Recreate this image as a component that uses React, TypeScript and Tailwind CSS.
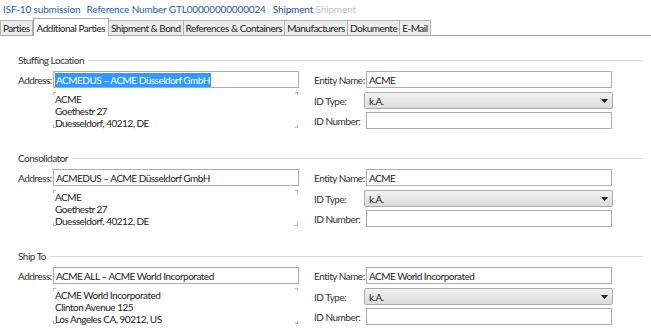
const tabs = [
  "Parties",
  "Additional Parties",
  "Shipment & Bond",
  "References & Containers",
  "Manufacturers",
  "Dokumente",
  "E-Mail",
];

const sections = [
  {
    title: "Stuffing Location",
    address: "ACMEDUS – ACME Düsseldorf GmbH",
    selected: true,
    lines: ["ACME", "Goethestr 27", "Duesseldorf, 40212, DE"],
    entity: "ACME",
  },
  {
    title: "Consolidator",
    address: "ACMEDUS – ACME Düsseldorf GmbH",
    selected: false,
    lines: ["ACME", "Goethestr 27", "Duesseldorf, 40212, DE"],
    entity: "ACME",
  },
  {
    title: "Ship To",
    address: "ACME ALL – ACME World Incorporated",
    selected: false,
    lines: ["ACME World Incorporated", "Clinton Avenue 125", "Los Angeles CA, 90212, US"],
    entity: "ACME World Incorporated",
  },
];

function Corner({ pos }: { pos: "tl" | "tr" | "bl" | "br" }) {
  const cls = {
    tl: "left-0 top-0 border-l border-t",
    tr: "right-0 top-0 border-r border-t",
    bl: "left-0 bottom-0 border-l border-b",
    br: "right-0 bottom-0 border-r border-b",
  }[pos];
  return <span className={`absolute h-[3px] w-[3px] border-[#b5b5b5] ${cls}`} />;
}

function Section({
  title,
  address,
  selected,
  lines,
  entity,
}: (typeof sections)[number]) {
  return (
    <div className="mb-[23px]">
      <div className="flex h-[12px] items-center gap-[4px]">
        <span className="whitespace-nowrap text-[#333]">{title}</span>
        <div className="mr-[8px] h-px flex-1 bg-[#d9d9d9]" />
      </div>
      <div className="mt-[5px] flex">
        <div className="w-[296px] shrink-0">
          <div className="flex h-[17px] items-center">
            <span className="w-[35px] shrink-0 whitespace-nowrap text-[#333]">Address:</span>
            <div className="flex h-[17px] w-[246px] shrink-0 items-center overflow-hidden whitespace-nowrap border border-[#abadb3] px-[1px]">
              <span
                className={
                  selected
                    ? "bg-[#3399ff] px-[1px] leading-[14px] text-white"
                    : "px-[1px] text-[#222]"
                }
              >
                {address}
              </span>
            </div>
          </div>
          <div className="relative ml-[35px] mt-[4px] h-[36px] w-[245px] whitespace-nowrap pl-[2px] pt-[1px] leading-[12px] text-[#222]">
            <Corner pos="tl" />
            <Corner pos="tr" />
            <Corner pos="bl" />
            <Corner pos="br" />
            {lines.map((l) => (
              <div key={l}>{l}</div>
            ))}
          </div>
        </div>
        <div className="w-[300px] shrink-0">
          <div className="flex h-[17px] items-center">
            <span className="w-[52px] shrink-0 whitespace-nowrap text-[#333]">Entity Name:</span>
            <div className="flex h-[17px] w-[246px] items-center whitespace-nowrap border border-[#abadb3] px-[2px] text-[#222]">
              {entity}
            </div>
          </div>
          <div className="mt-[4px] flex h-[17px] items-center">
            <span className="w-[50px] shrink-0 whitespace-nowrap text-[#333]">ID Type:</span>
            <div className="flex h-[17px] w-[249px] items-center justify-between rounded-[2px] border border-[#acacac] bg-gradient-to-b from-[#f3f3f3] to-[#dadada] pl-[4px] pr-[4px] text-[#222]">
              <span>k.A.</span>
              <svg width="7" height="4" viewBox="0 0 7 4">
                <path d="M0 0 H7 L3.5 4 Z" fill="#222" />
              </svg>
            </div>
          </div>
          <div className="mt-[3px] flex h-[17px] items-center">
            <span className="w-[52px] shrink-0 whitespace-nowrap text-[#333]">ID Number:</span>
            <div className="h-[17px] w-[246px] border border-[#abadb3]" />
          </div>
        </div>
      </div>
    </div>
  );
}

export default function App() {
  return (
    <div
      className="h-[330px] w-[651px] overflow-hidden bg-white text-[10px] leading-[12px] tracking-[-0.5px]"
      style={{ fontFamily: "Lato, 'Liberation Sans', sans-serif" }}
    >
      <div className="flex h-[18px] items-center whitespace-nowrap px-[3px] tracking-[-0.15px] text-[#2a5ea8]">
        <span>ISF-10 submission</span>
        <span className="ml-[6px]">
          Reference Number <span>GTL00000000000024</span>
        </span>
        <span className="ml-[7px]">
          <span className="text-[#244f8f]">Shipment</span>{" "}
          <span className="text-[#c4c4c4]">Shipment</span>
        </span>
      </div>
      <div className="flex h-[18px] items-end border-b border-[#a9a9a9]">
        {tabs.map((t) => {
          const active = t === "Additional Parties";
          return (
            <div
              key={t}
              className={
                active
                  ? "-mb-px flex h-[18px] items-center whitespace-nowrap border border-b-0 border-[#a9a9a9] bg-white px-[3px] text-[#222]"
                  : "-ml-px flex h-[15px] items-center whitespace-nowrap border border-b-0 border-[#b4b4b4] bg-[#ececec] px-[2px] text-[#222] first:ml-0"
              }
            >
              {t}
            </div>
          );
        })}
      </div>
      <div className="pl-[18px] pt-[18px]">
        {sections.map((s) => (
          <Section key={s.title} {...s} />
        ))}
      </div>
    </div>
  );
}
